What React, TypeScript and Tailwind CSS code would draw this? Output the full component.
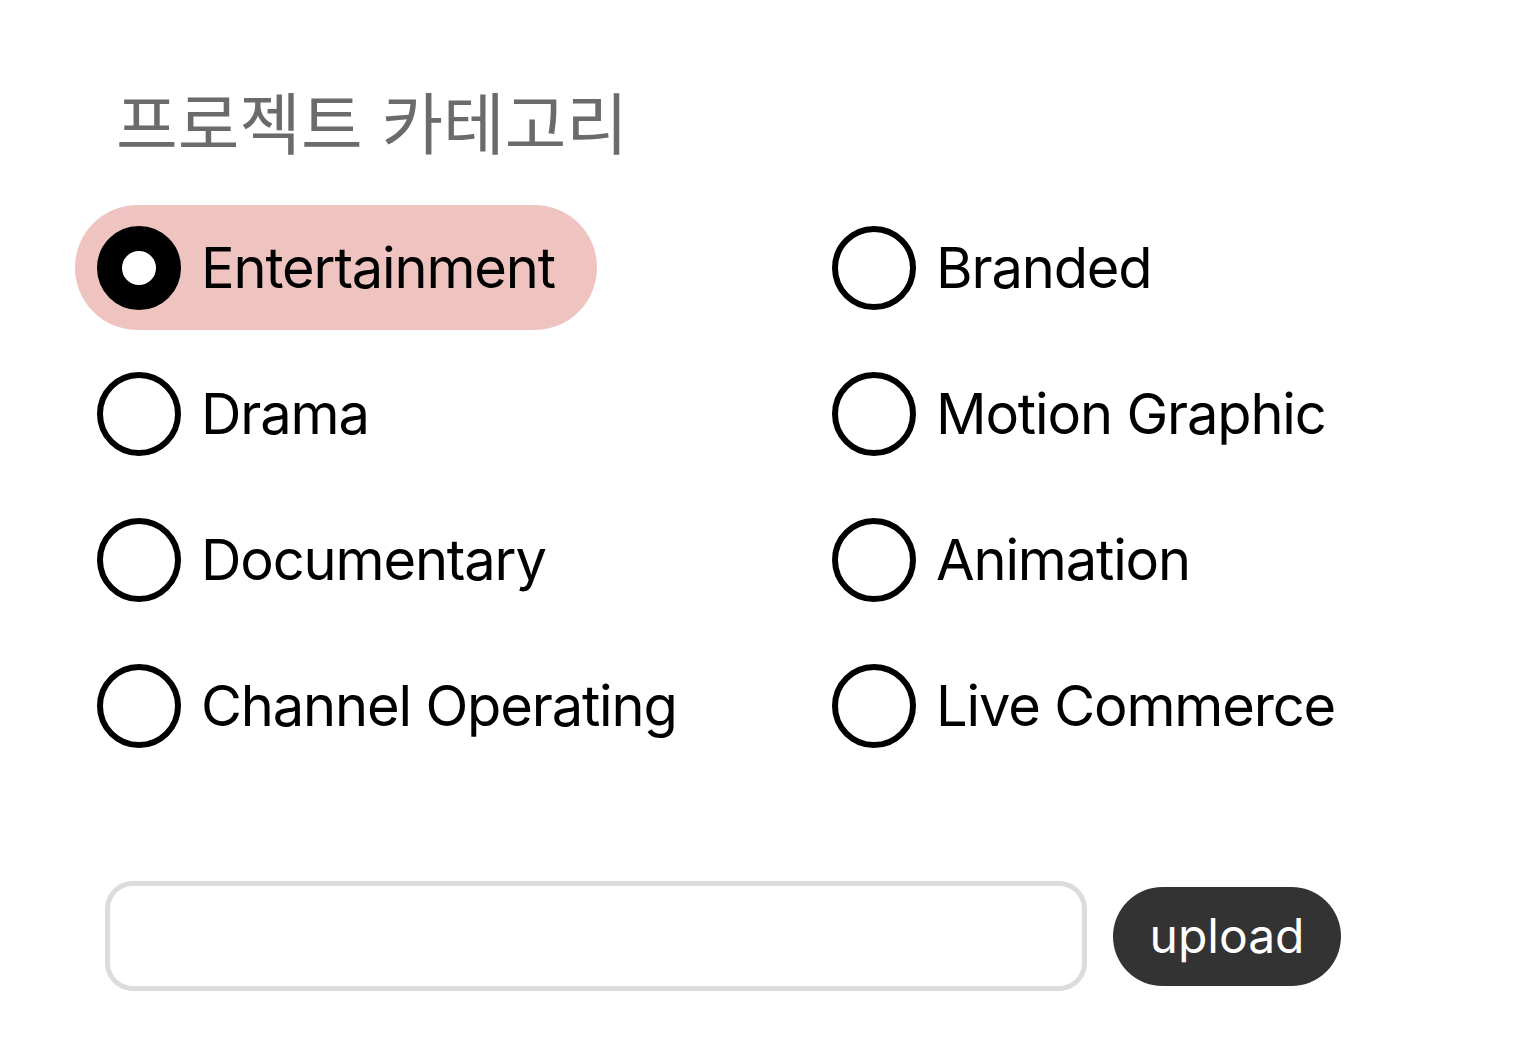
import React, { useState } from 'react';

const categories = [
  'Entertainment',
  'Branded',
  'Drama',
  'Motion Graphic',
  'Documentary',
  'Animation',
  'Channel Operating',
  'Live Commerce',
];

function RadioItem({ label, checked, onSelect }: { label: string; checked: boolean; onSelect: () => void }) {
  return (
    <button
      type="button"
      onClick={onSelect}
      className={`flex h-[125px] w-fit items-center rounded-full pl-[22px] pr-[42px] ${checked ? 'bg-[#efc3bf]' : 'bg-transparent'}`}
    >
      <span
        className={`box-border h-[84px] w-[84px] shrink-0 rounded-full border-black bg-white ${checked ? 'border-[25px]' : 'border-[6px]'}`}
      />
      <span className="ml-[20px] whitespace-nowrap text-[56px] leading-none tracking-[-1.15px] text-black">{label}</span>
    </button>
  );
}

export default function App() {
  const [selected, setSelected] = useState('Entertainment');
  const [file, setFile] = useState('');

  return (
    <div className="min-h-screen w-full bg-white font-['Inter','Noto_Sans_CJK_KR',sans-serif]">
      <div className="pt-[91px] pl-[75px]">
        <h2 className="ml-[41px] text-[67px] font-normal leading-none text-[#6b6b6b]">프로젝트 카테고리</h2>

        <div className="mt-[47px] grid grid-cols-[735px_auto] gap-y-[21px]">
          {categories.map((c) => (
            <RadioItem key={c} label={c} checked={selected === c} onSelect={() => setSelected(c)} />
          ))}
        </div>

        <div className="mt-[113px] ml-[30px] flex items-center">
          <input
            value={file}
            onChange={(e) => setFile(e.target.value)}
            className="box-border h-[110px] w-[982px] rounded-[28px] border-[5px] border-[#dcdcdc] bg-white px-6 text-[48px] outline-none"
          />
          <button
            type="button"
            className="ml-[26px] h-[99px] w-[228px] rounded-full bg-[#333333] text-[48px] leading-none text-white"
          >
            upload
          </button>
        </div>
      </div>
    </div>
  );
}
